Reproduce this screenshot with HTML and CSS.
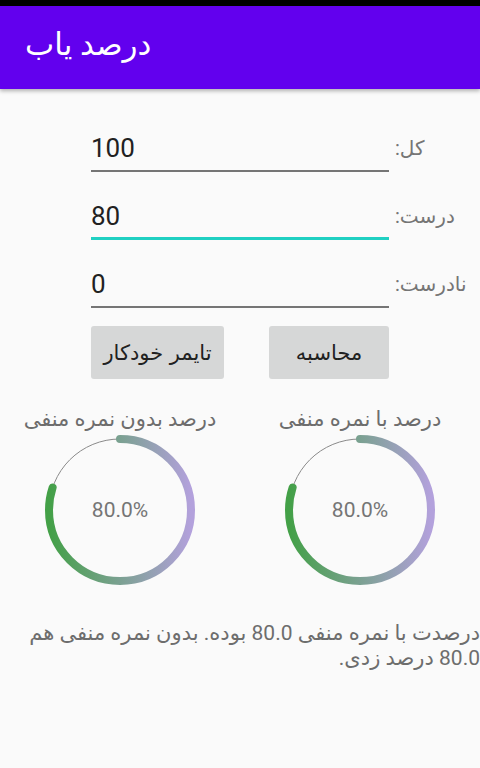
FILE: index.html
```html
<!DOCTYPE html>
<html lang="fa">

<head>
    <meta charset="UTF-8">
    <meta name="viewport" content="width=device-width, initial-scale=1.0">
    <title>درصد یاب</title>
    <link rel="stylesheet" href="styles.css">
</head>

<body>
    <div class="statusbar"></div>
    <div class="appbar">
        <span class="title" dir="rtl">درصد یاب</span>
    </div>

    <div class="content">
        <div class="row">
            <div class="field">100</div>
            <label class="label" dir="rtl">کل:</label>
        </div>
        <div class="row">
            <div class="field focused">80</div>
            <label class="label" dir="rtl">درست:</label>
        </div>
        <div class="row">
            <div class="field">0</div>
            <label class="label" dir="rtl">نادرست:</label>
        </div>

        <div class="buttons">
            <button class="btn btn-timer" dir="rtl">تایمر خودکار</button>
            <button class="btn btn-calc" dir="rtl">محاسبه</button>
        </div>

        <div class="charts">
            <div class="chart">
                <div class="chart-title" dir="rtl">درصد بدون نمره منفی</div>
                <div class="ring">
                    <svg width="150" height="150" viewBox="0 0 150 150">
                        <defs>
                            <!-- gradient runs left to right on screen, ring is rotated -90 -->
                            <linearGradient id="g1" gradientUnits="userSpaceOnUse" x1="0" y1="4" x2="0" y2="146">
                                <stop offset="0" stop-color="#43a047" />
                                <stop offset="1" stop-color="#b3a1dc" />
                            </linearGradient>
                        </defs>
                        <circle cx="75" cy="75" r="71" fill="none" stroke="#8a8a8a" stroke-width="1" />
                        <circle cx="75" cy="75" r="71" fill="none" stroke="url(#g1)" stroke-width="8"
                            stroke-linecap="round" stroke-dasharray="356.9 446.1" transform="rotate(-90 75 75)" />
                    </svg>
                    <span class="ring-value">80.0%</span>
                </div>
            </div>
            <div class="chart">
                <div class="chart-title" dir="rtl">درصد با نمره منفی</div>
                <div class="ring">
                    <svg width="150" height="150" viewBox="0 0 150 150">
                        <defs>
                            <linearGradient id="g2" gradientUnits="userSpaceOnUse" x1="0" y1="4" x2="0" y2="146">
                                <stop offset="0" stop-color="#43a047" />
                                <stop offset="1" stop-color="#b3a1dc" />
                            </linearGradient>
                        </defs>
                        <circle cx="75" cy="75" r="71" fill="none" stroke="#8a8a8a" stroke-width="1" />
                        <circle cx="75" cy="75" r="71" fill="none" stroke="url(#g2)" stroke-width="8"
                            stroke-linecap="round" stroke-dasharray="356.9 446.1" transform="rotate(-90 75 75)" />
                    </svg>
                    <span class="ring-value">80.0%</span>
                </div>
            </div>
        </div>

        <p class="result" dir="rtl">درصدت با نمره منفی 80.0 بوده. بدون نمره منفی هم 80.0 درصد زدی.</p>
    </div>
</body>
</html>
```

FILE: styles.css
```css
body {
    margin: 0;
    width: 480px;
    height: 768px;
    overflow: hidden;
    background-color: #fafafa;
    font-family: Roboto, "DejaVu Sans", sans-serif;
}

.statusbar {
    height: 6px;
    background-color: #000;
}

.appbar {
    height: 83px;
    background-color: #6200ee;
    display: flex;
    align-items: center;
    padding-left: 25px;
    box-shadow: 0 2px 4px rgba(0, 0, 0, 0.3);
    position: relative;
}

.appbar .title {
    color: #fff;
    font-size: 31px;
    padding-bottom: 6px;
}

.content {
    padding-top: 21px;
}

.row {
    display: flex;
    align-items: center;
    height: 68px;
    padding-left: 91px;
}

.field {
    width: 298px;
    height: 44px;
    margin-top: 12px;
    box-sizing: border-box;
    border-bottom: 2px solid #757575;
    font-size: 26px;
    line-height: 40px;
    color: #212121;
}

.field.focused {
    border-bottom: 3px solid #20d0c2;
}

.label {
    margin-left: 6px;
    margin-top: 8px;
    font-size: 20px;
    color: #757575;
}

.buttons {
    display: flex;
    justify-content: space-between;
    width: 298px;
    margin: 12px 0 0 91px;
}

.btn {
    height: 53px;
    border: none;
    border-radius: 3px;
    background-color: #d6d7d7;
    font-family: "DejaVu Sans", sans-serif;
    font-size: 21px;
    color: #212121;
    padding: 0;
}

.btn-timer {
    width: 133px;
}

.btn-calc {
    width: 120px;
}

.charts {
    display: flex;
    margin-top: 26px;
}

.chart {
    width: 240px;
    display: flex;
    flex-direction: column;
    align-items: center;
}

.chart-title {
    font-size: 21px;
    color: #6d6d6d;
    height: 28px;
    line-height: 28px;
}

.ring {
    position: relative;
    width: 150px;
    height: 150px;
    margin-top: 2px;
}

.ring svg {
    display: block;
}

.ring-value {
    position: absolute;
    inset: 0;
    display: flex;
    align-items: center;
    justify-content: center;
    font-size: 21px;
    color: #757575;
}

.result {
    margin: 36px 0 0 0;
    padding-left: 16px;
    font-size: 21px;
    line-height: 25px;
    color: #6d6d6d;
    text-align: right;
}
```
